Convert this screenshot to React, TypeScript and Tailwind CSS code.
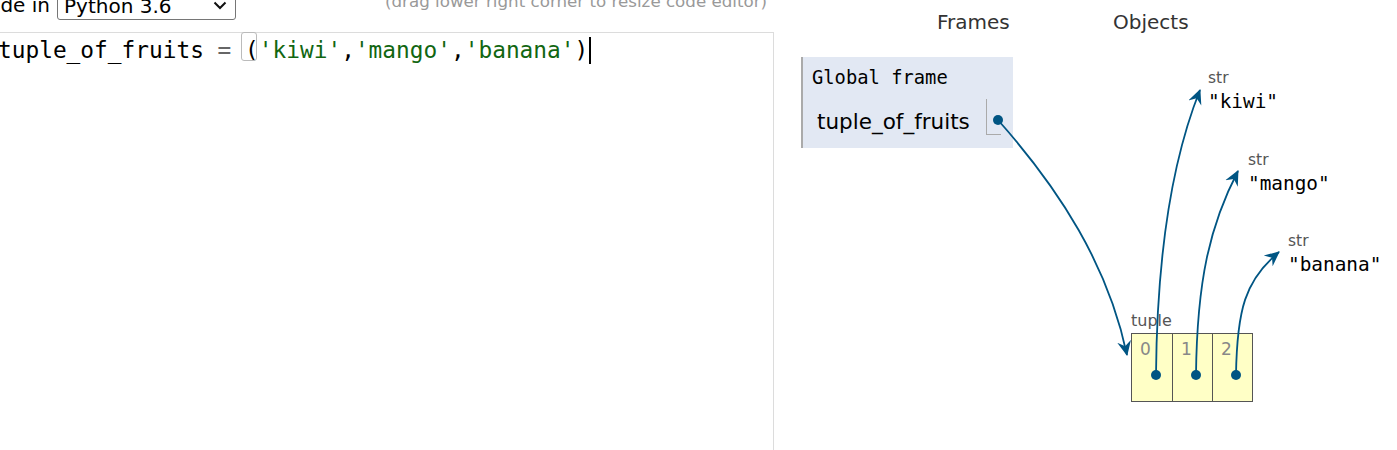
import React from "react";

const sans = { fontFamily: '"DejaVu Sans", Verdana, sans-serif' };
const mono = { fontFamily: '"DejaVu Sans Mono", "Liberation Mono", monospace' };

export default function App() {
  return (
    <div className="relative w-[1397px] h-[450px] overflow-hidden bg-white flex" style={sans}>
      {/* left column: header + editor */}
      <div className="w-[774px] flex flex-col shrink-0">
        <div className="h-[32px] relative flex items-start">
          <div className="ml-[-82px] mt-[-8px] text-[20px] text-black leading-[26px] whitespace-nowrap">Write code in</div>
          <div className="ml-[7px] mt-[-7px] w-[179px] h-[27px] border border-[#767676] rounded-[3px] flex items-center justify-between pl-[6px] pr-[8px] text-[20px] leading-[26px] text-black">
            <span className="mt-[-2px]">Python 3.6</span>
            <svg width="14" height="9" viewBox="0 0 14 9" className="mt-[-2px]">
              <path d="M1.5 1.5 L7 7 L12.5 1.5" fill="none" stroke="#111" strokeWidth="2" />
            </svg>
          </div>
          <div className="ml-[149px] mt-[-10px] text-[16.7px] leading-[22px] text-[#999] whitespace-nowrap">
            (drag lower right corner to resize code editor)
          </div>
        </div>
        <div className="flex-1 border-t border-r border-[#dcdcdc] bg-white">
          <div className="ml-[-2px] mt-[3px] h-[28px] flex items-center text-[22.8px] whitespace-nowrap" style={mono}>
            <span className="text-black">tuple_of_fruits</span>
            <span className="text-[#666]">&nbsp;=&nbsp;</span>
            <span className="relative text-black">
              <span className="absolute left-[-4px] top-[-1px] w-[16px] h-[29px] border border-[#bbb] rounded-[3px]"></span>
              (
            </span>
            <span className="text-[#116611]">'kiwi'</span>
            <span className="text-black">,</span>
            <span className="text-[#116611]">'mango'</span>
            <span className="text-black">,</span>
            <span className="text-[#116611]">'banana'</span>
            <span className="text-black">)</span>
            <span className="ml-[1px] w-[2px] h-[27px] bg-black"></span>
          </div>
        </div>
      </div>

      {/* right: diagram canvas */}
      <div className="relative flex-1">
        <div className="absolute left-[163px] top-[10px] text-[20px] text-[#333] leading-[24px]">Frames</div>
        <div className="absolute left-[339px] top-[10px] text-[20px] text-[#333] leading-[24px]">Objects</div>

        {/* Global frame */}
        <div className="absolute left-[27px] top-[57px] w-[212px] h-[91px] bg-[#e2e8f3] border-l-2 border-[#aaa]">
          <div className="ml-[9px] mt-[10px] text-[18.8px] leading-[22px] text-black" style={mono}>Global frame</div>
          <div className="flex items-start mt-[10px]">
            <div className="ml-[14px] mt-[10px] text-[21.5px] leading-[26px] text-black">tuple_of_fruits</div>
            <div className="ml-[16px] w-[15px] h-[36px] border-l border-b border-[#aaa]"></div>
          </div>
        </div>

        {/* str objects */}
        <div className="absolute left-[434px] top-[69px]">
          <div className="text-[15.5px] leading-[18px] text-[#555]">str</div>
          <div className="mt-[3px] text-[19.4px] leading-[24px] text-black" style={mono}>"kiwi"</div>
        </div>
        <div className="absolute left-[474px] top-[151px]">
          <div className="text-[15.5px] leading-[18px] text-[#555]">str</div>
          <div className="mt-[3px] text-[19.4px] leading-[24px] text-black" style={mono}>"mango"</div>
        </div>
        <div className="absolute left-[514px] top-[232px]">
          <div className="text-[15.5px] leading-[18px] text-[#555]">str</div>
          <div className="mt-[3px] text-[19.4px] leading-[24px] text-black" style={mono}>"banana"</div>
        </div>

        {/* tuple */}
        <div className="absolute left-[357px] top-[311px]">
          <div className="text-[16px] leading-[20px] text-[#555]">tuple</div>
          <div className="mt-[2px] flex border border-[#555] bg-[#ffffc6] h-[69px]">
            <div className="w-[41px] border-r border-[#555] pl-[8px] pt-[4px] text-[17px] leading-[22px] text-[#888]">0</div>
            <div className="w-[40px] border-r border-[#555] pl-[8px] pt-[4px] text-[17px] leading-[22px] text-[#888]">1</div>
            <div className="w-[39px] pl-[8px] pt-[4px] text-[17px] leading-[22px] text-[#888]">2</div>
          </div>
        </div>
      </div>

      {/* pointer arrows overlay */}
      <svg className="absolute left-0 top-0 pointer-events-none" width="1397" height="450" viewBox="0 0 1397 450">
        <defs>
          <marker id="ah" markerWidth="16" markerHeight="16" refX="14" refY="8" orient="auto" markerUnits="userSpaceOnUse">
            <path d="M0,1 L15,8 L0,15 L5,8 Z" fill="#005583" />
          </marker>
        </defs>
        <g fill="none" stroke="#005583" strokeWidth="1.8">
          <path d="M998 120 C 1060 190, 1108 265, 1127 355" markerEnd="url(#ah)" />
          <path d="M1156 375 C 1157 250, 1172 160, 1200 90" markerEnd="url(#ah)" />
          <path d="M1196 375 C 1197 280, 1210 225, 1238 171" markerEnd="url(#ah)" />
          <path d="M1236 375 C 1237 310, 1245 280, 1279 252" markerEnd="url(#ah)" />
        </g>
        <g fill="#005583">
          <circle cx="998" cy="120" r="5" />
          <circle cx="1156" cy="375" r="5" />
          <circle cx="1196" cy="375" r="5" />
          <circle cx="1236" cy="375" r="5" />
        </g>
      </svg>
    </div>
  );
}
